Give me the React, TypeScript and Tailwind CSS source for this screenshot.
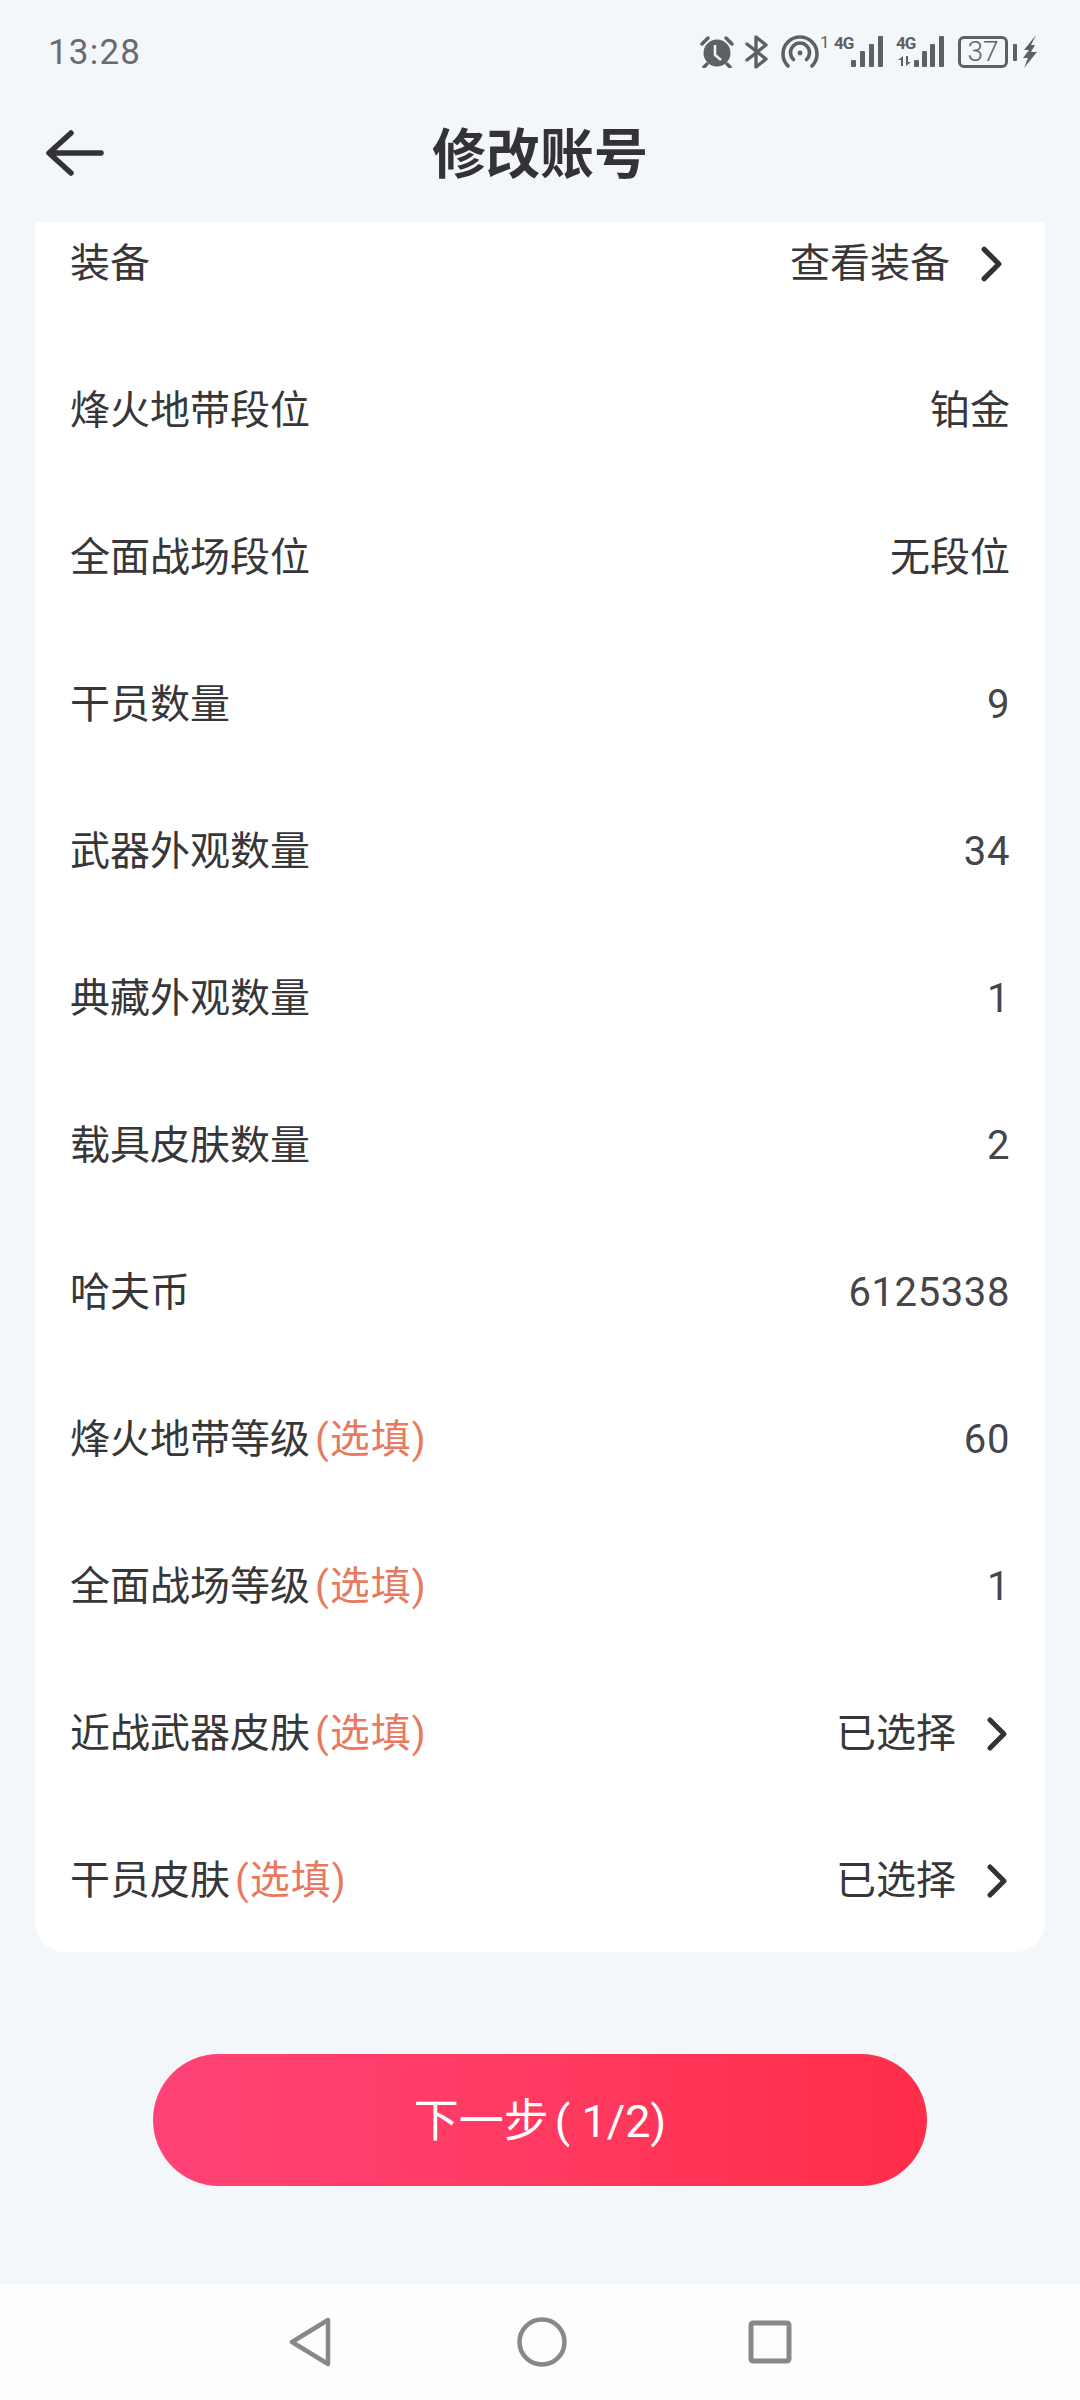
import React from 'react';

const font = { fontFamily: '"Roboto", "Noto Sans CJK SC", sans-serif' };

type Row = { label: string; value: string; optional?: boolean; arrow?: boolean; shifted?: boolean };

const rows: Row[] = [
  { label: '装备', value: '查看装备', arrow: true, shifted: true },
  { label: '烽火地带段位', value: '铂金' },
  { label: '全面战场段位', value: '无段位' },
  { label: '干员数量', value: '9' },
  { label: '武器外观数量', value: '34' },
  { label: '典藏外观数量', value: '1' },
  { label: '载具皮肤数量', value: '2' },
  { label: '哈夫币', value: '6125338' },
  { label: '烽火地带等级', value: '60', optional: true },
  { label: '全面战场等级', value: '1', optional: true },
  { label: '近战武器皮肤', value: '已选择', optional: true, arrow: true },
  { label: '干员皮肤', value: '已选择', optional: true, arrow: true },
];

const Signal = ({ dual }: { dual?: boolean }) => (
  <div className="relative h-[32px] w-[50px]">
    <span className="absolute left-[1px] top-[-3px] text-[17px] font-bold leading-[20px] tracking-[-1px] text-[#5f6064]">4G</span>
    <svg viewBox="0 0 50 32" className="h-[32px] w-[50px]" fill="#5f6064">
      {dual && <path d="M8 20 3 24h3v6h2zM11 20v10l5-4h-3v-6z" />}
      <rect x={dual ? 19 : 18} y="24" width="5" height="7" rx="1" />
      <rect x={dual ? 27 : 27} y="15" width="5" height="16" rx="1" />
      <rect x={dual ? 35 : 36} y="8" width="5" height="23" rx="1" />
      <rect x={dual ? 44 : 45} y="0" width="5" height="31" rx="1" />
    </svg>
  </div>
);

const StatusBar = () => (
  <div className="flex h-[100px] items-center justify-between pl-[48px] pr-[43px] pt-[4px]">
    <span className="text-[35px] leading-none tracking-[1.200px] text-[#6a6b6f]">13:28</span>
    <div className="flex items-center">
      <svg viewBox="0 0 34 32" className="h-[32px] w-[34px]">
        <circle cx="17" cy="17" r="13.500" fill="#5f6064" />
        <path d="M2 8 8 2M32 8 26 2M7 28 4 31M27 28 30 31" stroke="#5f6064" strokeWidth="3.500" strokeLinecap="round" />
        <path d="M15 9v10l6 5" fill="none" stroke="#f4f7fa" strokeWidth="2.500" />
      </svg>
      <svg viewBox="0 0 24 34" className="ml-[11px] h-[34px] w-[24px]" fill="none" stroke="#5f6064" strokeWidth="3.400" strokeLinejoin="round" strokeLinecap="round">
        <path d="M2 9 21 24 11 32V2l10 8L2 25" />
      </svg>
      <svg viewBox="0 0 38 34" className="ml-[12px] h-[34px] w-[38px]" fill="none" stroke="#5f6064" strokeWidth="3.600" strokeLinecap="round">
        <path d="M7 31A17 17 0 1 1 31 31" />
        <path d="M12.500 24.500A9.500 9.500 0 1 1 25.500 24.500" />
        <circle cx="19" cy="18" r="2.400" fill="#5f6064" stroke="none" />
      </svg>
      <div className="relative h-[34px] w-[14px]">
        <span className="absolute left-[1px] top-[-3px] text-[17px] leading-[20px] text-[#5f6064]">1</span>
      </div>
      <Signal />
      <div className="w-[12px]" />
      <Signal dual />
      <div className="ml-[13px] flex h-[32px] w-[50px] items-center justify-center rounded-[6px] border-[3px] border-[#5f6064] text-[28px] font-light leading-none text-[#5f6064]">
        37
      </div>
      <div className="ml-[5px] h-[17px] w-[4px] rounded-[1px] bg-[#5f6064]" />
      <svg viewBox="0 0 15 34" className="ml-[5px] h-[34px] w-[15px]" fill="#5f6064">
        <path d="M14 0 2 15h5L1 23l5 0-4 10L15 17H9l4-7H9z" />
      </svg>
    </div>
  </div>
);

const Header = () => (
  <div className="relative flex h-[122px] items-start justify-center pt-[25px]">
    <svg viewBox="0 0 58 46" className="absolute left-[46px] top-[30px] h-[46px] w-[58px]" fill="none" stroke="#333336" strokeWidth="5.500" strokeLinecap="round" strokeLinejoin="round">
      <path d="M25 3 3 23 25 43M7 23H55" />
    </svg>
    <h1 className="text-[54px] font-bold leading-[62px] text-[#333336]">修改账号</h1>
  </div>
);

const Chevron = ({ large }: { large?: boolean }) => (
  <svg viewBox="0 0 20 34" className={large ? 'ml-[31px] mr-[2px] h-[36px] w-[21px]' : 'ml-[31px] mr-[3px] h-[34px] w-[20px]'} fill="none" stroke="#333336" strokeWidth="5" strokeLinecap="round" strokeLinejoin="round">
    <path d="M3 3 17 17 3 31" />
  </svg>
);

const FormRow = ({ row }: { row: Row }) => (
  <div className="flex h-[147px] items-center justify-between pl-[35px] pr-[35px] pt-[3px] text-[40px] leading-none text-[#37373a]">
    <div className="flex items-center">
      <span>{row.label}</span>
      {row.optional && <span className="ml-[5px] tracking-[1px] text-[#e8795f]">(选填)</span>}
    </div>
    <div className={row.shifted ? 'mr-[6px] flex items-center' : 'flex items-center'}>
      <span className={/\d/.test(row.value) ? 'tracking-[0.600px] text-[#45454a]' : ''}>{row.value}</span>
      {row.arrow && <Chevron large={row.shifted} />}
    </div>
  </div>
);

export default function App() {
  return (
    <div className="flex h-[2400px] w-[1080px] flex-col bg-[#f4f7fa]" style={font}>
      <StatusBar />
      <Header />
      <div className="mx-[35px] h-[1730px] overflow-hidden rounded-b-[30px] bg-white">
        <div className="-mt-[33px]">
          {rows.map((row) => (
            <FormRow key={row.label} row={row} />
          ))}
        </div>
      </div>
      <div className="flex flex-1 items-start justify-center pt-[102px]">
        <button className="flex h-[132px] w-[774px] items-center justify-center rounded-full bg-gradient-to-r from-[#ff4377] to-[#ff2d48] pt-[2px] text-[45px] leading-none text-white">
          <span>下一步</span>
          <span className="ml-[6px]">( 1/2)</span>
        </button>
      </div>
      <div className="flex h-[116px] items-center justify-center bg-[#fdfdfd]">
        <svg viewBox="0 0 42 50" className="mr-[186px] h-[50px] w-[42px]" fill="none" stroke="#88888a" strokeWidth="4.500" strokeLinejoin="round">
          <path d="M39 3 3 25 39 47Z" />
        </svg>
        <svg viewBox="0 0 50 50" className="h-[50px] w-[50px]" fill="none" stroke="#88888a" strokeWidth="4.500">
          <circle cx="25" cy="25" r="22.500" />
        </svg>
        <svg viewBox="0 0 44 44" className="ml-[181px] h-[44px] w-[44px]" fill="none" stroke="#88888a" strokeWidth="5" strokeLinejoin="round">
          <rect x="3" y="3" width="38" height="38" rx="2" />
        </svg>
      </div>
    </div>
  );
}
